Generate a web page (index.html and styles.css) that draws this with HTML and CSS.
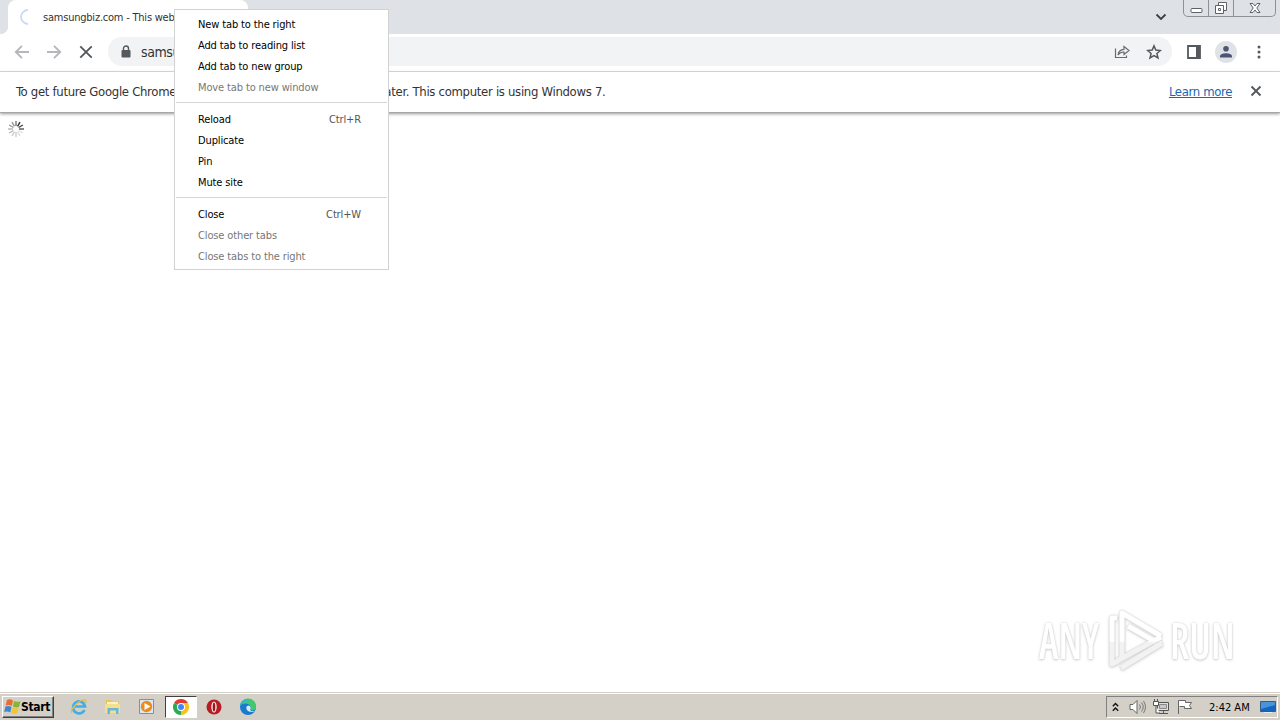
FILE: index.html
```html
<!DOCTYPE html>
<html lang="en">
<head>
  <meta charset="UTF-8">
  <title>samsungbiz.com</title>
  <link rel="stylesheet" href="styles.css">
</head>
<body>

  <div class="tab-strip">
    <div class="tab-edge"></div>
    <div class="tab">
      <svg class="tab-spinner" width="16" height="16" viewBox="0 0 16 16"><path d="M10 1A7 7 0 0 0 10 15" fill="none" stroke="#c9daf8" stroke-width="1.8"/></svg>
      <span class="tab-title">samsungbiz.com - This website</span>
    </div>
    <svg class="tab-search" width="12" height="8" viewBox="0 0 12 8"><path d="M1.500 1.500L6 6l4.500-4.500" fill="none" stroke="#3c4043" stroke-width="1.800"/></svg>
    <div class="window-controls">
      <span class="win-btn"><svg width="13" height="16" viewBox="0 0 13 16"><rect x="1" y="8.500" width="11" height="4" rx="1" fill="#fff" stroke="#5d6269"/></svg></span>
      <span class="win-btn"><svg width="14" height="16" viewBox="0 0 14 16"><path d="M4.500 2.500h8v8h-8z" fill="#fff" stroke="#5d6269"/><path d="M1.500 5.500h8v8h-8z" fill="#fff" stroke="#5d6269"/><path d="M4.500 8.500h2v2h-2z" fill="none" stroke="#5d6269"/></svg></span>
      <span class="win-btn win-close"><svg width="14" height="16" viewBox="0 0 14 16"><path d="M2 3.500h3l2 2.500 2-2.500h3L8.800 8l3.200 4.500H9L7 10l-2 2.500H2L5.200 8z" fill="#fff" stroke="#5d6269"/></svg></span>
    </div>
  </div>

  <div class="toolbar">
    <div class="nav">
      <svg width="16" height="16" viewBox="0 0 16 16"><path d="M15 8H2M8 1.800L1.800 8 8 14.200" fill="none" stroke="#b5b7ba" stroke-width="1.900"/></svg>
      <svg width="16" height="16" viewBox="0 0 16 16"><path d="M1 8h13M8 1.800L14.200 8 8 14.200" fill="none" stroke="#b5b7ba" stroke-width="1.900"/></svg>
      <svg width="16" height="16" viewBox="0 0 16 16"><path d="M2.300 2.300l11.400 11.400M13.700 2.300L2.300 13.700" fill="none" stroke="#55585c" stroke-width="1.900"/></svg>
    </div>
    <div class="omnibox">
      <svg width="10" height="14" viewBox="0 0 10 14"><rect x="0.500" y="5" width="9" height="7.500" rx="1" fill="#55585c"/><path d="M2.500 5V3.500a2.500 2.500 0 0 1 5 0V5" fill="none" stroke="#55585c" stroke-width="1.400"/></svg>
      <span class="url">samsungbiz.com</span>
      <svg class="share" width="16" height="16" viewBox="0 0 16 16"><path d="M1.500 4.500v9h11v-2M4 11c.5-4 2.500-5.500 6-5.700V2.500L15 6.500l-5 4V8C7.500 8 5.500 8.800 4 11z" fill="none" stroke="#686b70" stroke-width="1.200"/></svg>
      <svg width="16" height="16" viewBox="0 0 16 16"><path d="M8 1.900l1.800 4.200 4.600.4-3.500 3 1.100 4.500L8 11.600 4 14l1.100-4.500-3.500-3 4.600-.4z" fill="none" stroke="#55585c" stroke-width="1.500"/></svg>
    </div>
    <svg class="side-panel" width="14" height="14" viewBox="0 0 14 14"><path d="M1 1h12v12H1z" fill="none" stroke="#55585c" stroke-width="1.800"/><path d="M9 1h4v12H9z" fill="#55585c"/></svg>
    <svg class="profile" width="22" height="22" viewBox="0 0 22 22"><circle cx="11" cy="11" r="11" fill="#dfe3e8"/><circle cx="11" cy="7.800" r="2.800" fill="#4a5672"/><path d="M5 16.500v-1.300C5 13 9 12.200 11 12.200s6 .8 6 3v1.300z" fill="#4a5672"/></svg>
    <svg class="more" width="4" height="16" viewBox="0 0 4 16"><g fill="#55585c"><circle cx="2" cy="3" r="1.500"/><circle cx="2" cy="8" r="1.500"/><circle cx="2" cy="13" r="1.500"/></g></svg>
  </div>

  <div class="infobar">
    <span class="infobar-text">To get future Google Chrome updates, you'll need Windows 10 or later. This computer is using Windows 7.</span>
    <a class="learn-more">Learn more</a>
    <svg width="12" height="12" viewBox="0 0 12 12"><path d="M1.500 1.500l9 9M10.500 1.500l-9 9" fill="none" stroke="#55585c" stroke-width="1.900"/></svg>
  </div>

  <div class="page">
    <svg class="page-spinner" width="16" height="16" viewBox="0 0 16 16">
      <g fill="none" stroke-width="1.400">
        <path d="M8 5V0" stroke="#777"/>
        <path d="M9.500 5.400L12 1.100" stroke="#333"/>
        <path d="M10.600 6.500L14.900 4" stroke="#444"/>
        <path d="M11 8h5" stroke="#555"/>
        <path d="M10.600 9.500l4.300 2.500M9.500 10.600l2.500 4.300" stroke="#ddd"/>
        <path d="M8 11v5M6.500 10.600L4 14.900" stroke="#ccc"/>
        <path d="M5.400 9.500L1.100 12M5 8H0" stroke="#bbb"/>
        <path d="M5.400 6.500L1.100 4M6.500 5.400L4 1.100" stroke="#999"/>
      </g>
    </svg>
    <div class="watermark">
      <span class="word">ANY</span>
      <svg width="60" height="64" viewBox="0 0 60 64">
        <defs>
          <linearGradient id="shade" gradientUnits="userSpaceOnUse" x1="0" y1="0" x2="0" y2="64">
            <stop offset="0.520" stop-color="#fff"/>
            <stop offset="0.540" stop-color="#f2f2f2"/>
          </linearGradient>
        </defs>
        <g fill="none" stroke="url(#shade)" stroke-width="5" stroke-linejoin="round">
          <path d="M11 10H6v46l6-3"/>
          <path d="M16 51V5l39 23"/>
          <path d="M22 18l28 16"/>
          <path d="M11 53l44-24"/>
          <path d="M15 60l41-25"/>
        </g>
      </svg>
      <span class="word">RUN</span>
    </div>
  </div>

  <div class="taskbar">
    <div class="start">
      <svg width="17" height="16" viewBox="0 0 17 16"><path d="M3 1q3-1.500 6 .5L7.800 7Q5 5.500 1.700 6.500z" fill="#ed6b2d"/><path d="M10 2q3 1.500 6.500.2L15 8Q12 9 8.900 7.400z" fill="#82b73c"/><path d="M1.500 7.500q3-1.200 6 .5L6.300 13.500Q3.500 12 .2 13z" fill="#3d87d2"/><path d="M8.600 8.500q3 1.500 6 .5l-1.300 5.500q-3 1.200-6-.6z" fill="#f6c430"/></svg>
      <span>Start</span>
    </div>
    <div class="apps">
      <span class="app"><svg width="18" height="18" viewBox="0 0 18 18"><path d="M14.500 12A6 6 0 1 1 15 8.500H5" fill="none" stroke="#42aee5" stroke-width="2.700"/><path d="M2 15C-1 12 10 1 15 2c2 .5 1 3 0 4" fill="none" stroke="#e5bd45" stroke-width="1.300"/></svg></span>
      <span class="app"><svg width="18" height="18" viewBox="0 0 18 18"><path d="M2 2h5l1 1.500h7V13H2z" fill="#e9c65b"/><path d="M3 4h11v3H3z" fill="#fff4bd"/><path d="M1 6h15v9H1z" fill="#f4df8b"/><path d="M3.500 16v-6h11v6H12v-3.500H6V16z" fill="#66b6df"/></svg></span>
      <span class="app"><svg width="18" height="18" viewBox="0 0 18 18"><path d="M1.500 1.500h14v14h-14z" fill="#d7eafa" stroke="#5a9bcc"/><circle cx="8.500" cy="8.500" r="5.700" fill="#f08a19"/><path d="M6.500 5l6 3.500-6 3.500z" fill="#fff"/></svg></span>
      <span class="app active"><svg width="16" height="16" viewBox="0 0 16 16"><path d="M8 8L1.070 4A8 8 0 0 1 14.930 4z" fill="#e33b2e"/><path d="M8 8l6.930-4A8 8 0 0 1 8 16z" fill="#fbc116"/><path d="M8 8v8A8 8 0 0 1 1.070 4z" fill="#2da94f"/><path d="M8 4h6.930L11.500 10z" fill="#fbc116"/><circle cx="8" cy="8" r="4" fill="#fff"/><circle cx="8" cy="8" r="3" fill="#4285f4"/></svg></span>
      <span class="app"><svg width="16" height="16" viewBox="0 0 16 16"><circle cx="8" cy="8" r="7.500" fill="#b51d22"/><ellipse cx="8" cy="8" rx="2.700" ry="5.500" fill="#eee"/><ellipse cx="8" cy="8" rx="1.300" ry="4.500" fill="#a31318"/></svg></span>
      <span class="app"><svg width="18" height="18" viewBox="0 0 18 18"><circle cx="9" cy="9" r="8" fill="#1b79ce"/><path d="M1 8a8 8 0 0 1 16 1c0 3-3 4-5 3-2-.8 0-1.500-.5-3.500C10.500 5 4 4.500 1 8z" fill="#42c96d"/><path d="M1 8a8 8 0 0 1 11-6.500C8 3 4 4 1 8z" fill="#30b5d8"/><path d="M8 8c-2 3 1 7 6.500 5.500l1.500-.8c-3 1-5 0-5-1.200 1-1 1-3-1-4z" fill="#d3eef5"/></svg></span>
    </div>
    <div class="tray">
      <svg width="7" height="10" viewBox="0 0 7 10"><path d="M.8 4.300L3.500 1.600l2.700 2.700M.8 8.700L3.500 6l2.700 2.700" fill="none" stroke="#111" stroke-width="1.400"/></svg>
      <svg class="volume" width="17" height="16" viewBox="0 0 17 16"><path d="M1 5.500h3l4-4v13l-4-4H1z" fill="#fff" stroke="#666"/><path d="M10.500 5.500q2 2.500 0 5M12.500 3.500q3.500 4.500 0 9M14.500 2q4 6 0 12" fill="none" stroke="#777"/></svg>
      <svg class="network" width="17" height="16" viewBox="0 0 17 16"><path d="M4.500 3.500h11v8h-11zM6 14.500h9M10.500 12v2" fill="#e4e1dc" stroke="#555"/><path d="M6.500 5.500h7v4h-7z" fill="#c8c8c8" stroke="#888"/><path d="M.5 2.500h5v4h-5zM1.500 0v2M4.500 0v2M3 7v7h4" fill="#fff" stroke="#555"/></svg>
      <svg class="flag" width="16" height="16" viewBox="0 0 16 16"><path d="M1.500 15V1.500h7v2h6l-2 3 2 3h-7v-2h-5" fill="#fff" stroke="#666"/></svg>
      <span class="clock">2:42 AM</span>
      <svg class="desktop" width="16" height="14" viewBox="0 0 16 14"><path d="M.5 1.500h15v10H.5z" fill="#1764bd" stroke="#345c89"/><path d="M1 2h14v3L1 9z" fill="#4894dc"/><path d="M4 12.500h8" stroke="#e5edf5"/></svg>
    </div>
  </div>

  <div class="context-menu">
    <div class="menu-item">New tab to the right</div>
    <div class="menu-item">Add tab to reading list</div>
    <div class="menu-item">Add tab to new group</div>
    <div class="menu-item disabled">Move tab to new window</div>
    <div class="separator"></div>
    <div class="menu-item">Reload <span class="shortcut">Ctrl+R</span></div>
    <div class="menu-item">Duplicate</div>
    <div class="menu-item">Pin</div>
    <div class="menu-item">Mute site</div>
    <div class="separator"></div>
    <div class="menu-item">Close <span class="shortcut">Ctrl+W</span></div>
    <div class="menu-item disabled">Close other tabs</div>
    <div class="menu-item disabled">Close tabs to the right</div>
  </div>

</body>
</html>
```
FILE: styles.css
```css
* {
  box-sizing: border-box;
}

body {
  position: relative;
  display: flex;
  flex-direction: column;
  width: 1280px;
  height: 720px;
  margin: 0;
  overflow: hidden;
  background: #fff;
  color: #333;
  font-family: Tahoma, "DejaVu Sans Condensed", "DejaVu Sans", sans-serif;
  font-stretch: condensed;
  font-size: 11px;
}

svg {
  display: block;
  flex-shrink: 0;
}

.tab-strip {
  display: flex;
  height: 34px;
  background: #dee1e6;
}

.tab-edge {
  width: 8px;
  background: radial-gradient(circle at 0 26px, #dee1e6 8px, #fff 8.5px) no-repeat 0 0;
  clip-path: inset(26px 0 0 0);
}

.tab {
  display: flex;
  align-items: center;
  width: 240px;
  padding-left: 10px;
  background: #fff;
  border-radius: 8px 8px 0 0;
}

.tab-title {
  margin-left: 9px;
  white-space: nowrap;
  letter-spacing: -0.22px;
}

.tab-search {
  margin: 13px 16px 0 auto;
}

.window-controls {
  display: flex;
  width: 93px;
  height: 17px;
  margin-right: 4px;
  border: 1px solid #8d9199;
  border-top: none;
  border-radius: 0 0 5px 5px;
}

.win-btn {
  display: flex;
  justify-content: center;
  width: 25px;
  border-right: 1px solid #8d9199;
}

.win-close {
  flex: 1;
  border-right: none;
}

.toolbar {
  display: flex;
  align-items: center;
  height: 38px;
  padding: 0 19px 2px 14px;
  border-bottom: 1px solid #dadce0;
}

.nav {
  display: flex;
  gap: 16px;
}

.omnibox {
  display: flex;
  align-items: center;
  width: 1064px;
  height: 29px;
  margin-left: 14px;
  padding: 0 10px 0 13px;
  border-radius: 14px;
  background: #f1f3f4;
}

.url {
  margin-left: 10px;
  font-size: 14px;
  letter-spacing: -0.4px;
}

.share {
  margin-left: auto;
  margin-right: 16px;
}

.side-panel {
  margin-left: 15px;
}

.profile {
  margin-left: 14px;
}

.more {
  margin-left: auto;
}

.infobar {
  display: flex;
  align-items: center;
  height: 41px;
  padding: 0 18px 2px 16px;
  border-bottom: 1px solid #a7a7a7;
  box-shadow: 0 1px 3px #999;
  font-size: 13px;
}

.infobar-text {
  letter-spacing: -0.31px;
}

.learn-more {
  margin-left: auto;
  margin-right: 18px;
  color: #1967b2;
  letter-spacing: -0.35px;
  text-decoration: underline;
}

.page {
  display: flex;
  flex: 1;
  justify-content: space-between;
  align-items: flex-end;
  padding: 8px 47px 20px 8px;
}

.page-spinner {
  align-self: flex-start;
}

.watermark {
  display: flex;
  align-items: center;
  gap: 4px;
  color: #fff;
  font-family: "Open Sans", sans-serif;
  font-size: 50px;
  font-weight: 600;
  line-height: 64px;
  text-shadow: 0 0 2px #ccc, 0 1px 3px #ccc;
}

.word {
  width: 63px;
  transform: scaleX(0.8);
  transform-origin: left;
}

.watermark svg {
  filter: drop-shadow(0 0 1px #ccc) drop-shadow(0 1px 1px #ddd);
}

.taskbar {
  display: flex;
  align-items: center;
  height: 28px;
  padding: 1px 0 0 2px;
  border-top: 1px solid #d5d1c9;
  box-shadow: inset 0 1px #fff;
  background: #d4d0c8;
  color: #000;
}

.start {
  display: flex;
  align-items: center;
  width: 52px;
  height: 22px;
  padding-left: 1px;
  border: 1px solid;
  border-color: #fff #404040 #404040 #fff;
  box-shadow: inset -1px -1px #808080;
  font-size: 12px;
  font-weight: bold;
}

.start span {
  letter-spacing: -0.3px;
}

.apps {
  display: flex;
  margin-left: 8px;
}

.app {
  display: flex;
  align-items: center;
  justify-content: center;
  width: 34px;
  height: 22px;
}

.active {
  width: 32px;
  margin: 0 0 0 1px;
  border: 1px solid;
  border-color: #404040 #fff #fff #404040;
  background: #fff;
}

.tray {
  display: flex;
  align-items: center;
  width: 172px;
  height: 22px;
  margin-left: auto;
  margin-right: 2px;
  padding-left: 5px;
  border: 1px solid;
  border-color: #808080 #fff #fff #808080;
}

.volume {
  margin-left: 10px;
}

.network {
  margin-left: 7px;
}

.flag {
  margin-left: 7px;
}

.clock {
  margin-left: 16px;
  white-space: nowrap;
}

.desktop {
  margin-left: auto;
  margin-right: 1px;
}

.context-menu {
  position: absolute;
  top: 9px;
  left: 174px;
  width: 215px;
  height: 261px;
  padding: 4px 0;
  border: 1px solid #d2d2d2;
  background: #fff;
  color: #000;
}

.menu-item {
  display: flex;
  align-items: center;
  justify-content: space-between;
  height: 21px;
  padding: 0 27px 1px 23px;
  letter-spacing: -0.13px;
}

.shortcut {
  color: #555;
}

.disabled {
  color: #777;
}

.separator {
  height: 11px;
  padding-top: 4px;
}

.separator::before {
  content: "";
  display: block;
  height: 1px;
  margin: 0 1px;
  background: #d5d5d5;
}
```
